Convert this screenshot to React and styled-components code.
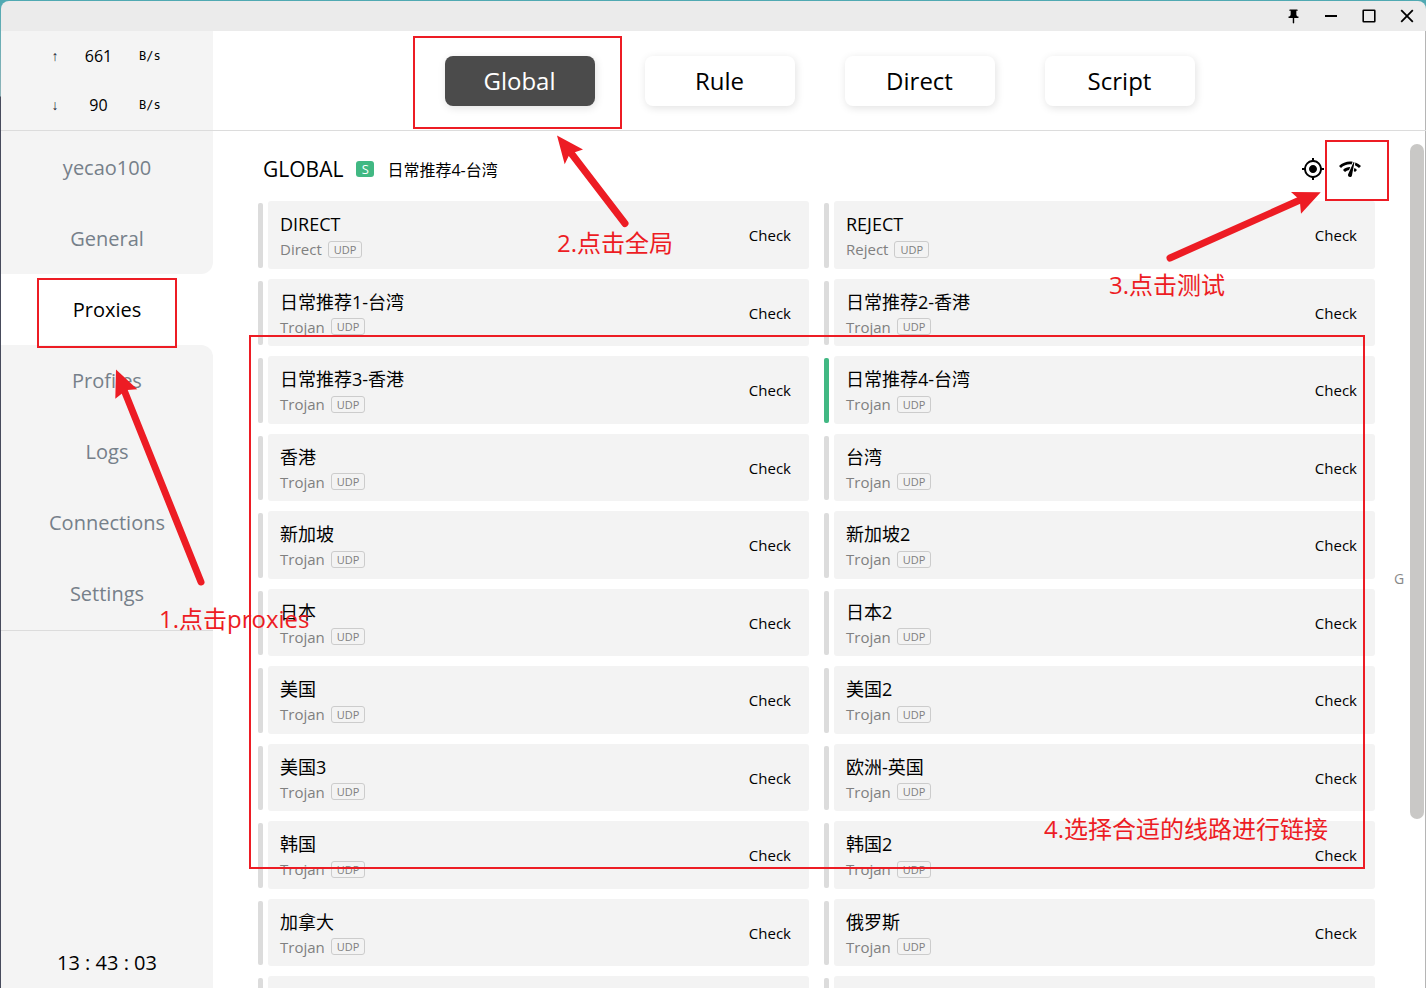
import React from 'react';
import styled, { createGlobalStyle, css } from 'styled-components';
import { MdPushPin, MdMyLocation, MdNetworkCheck } from 'react-icons/md';

const GlobalStyle = createGlobalStyle`
  * {
    box-sizing: border-box;
  }

  body {
    margin: 0;
    background: linear-gradient(#4fa9b2 0, #8fb3b8 96px, #474b5c 97px);
    font-family: 'Open Sans', 'Noto Sans CJK SC', sans-serif;
    color: #000;
  }

  button {
    font-family: inherit;
    color: inherit;
    border: none;
    padding: 0;
    background: none;
    cursor: pointer;
  }
`;

const Window = styled.div`
  position: relative;
  display: flex;
  flex-direction: column;
  height: 100vh;
  padding: 1px 0 0 1px;
  overflow: hidden;
`;

const TitleBar = styled.header`
  display: flex;
  flex: none;
  justify-content: flex-end;
  align-items: center;
  gap: 14px;
  height: 30px;
  padding-right: 7px;
  background: #ebebeb;
  border-radius: 8px 8px 0 0;
`;

const WindowButton = styled.button`
  display: flex;
  align-items: center;
  justify-content: center;
  width: 24px;
  height: 24px;
`;

const Body = styled.div`
  display: flex;
  flex: 1;
  min-height: 0;
  background: #fff;
  box-shadow: inset -1px 0 #b5b5b5;
`;

const Sidebar = styled.aside`
  display: flex;
  flex-direction: column;
  flex: none;
  width: 212px;
`;

const Traffic = styled.div`
  display: flex;
  flex-direction: column;
  height: 100px;
  background: #f4f4f4;
  border-bottom: 1px solid #dcdcdc;
`;

const TrafficRow = styled.div`
  display: flex;
  align-items: center;
  height: 50px;
  padding-left: 44px;
`;

const TrafficArrow = styled.span`
  width: 20px;
  font-size: 14px;
  text-align: center;
  font-family: 'Liberation Sans', sans-serif;
  color: #223;
`;

const TrafficValue = styled.span`
  width: 67px;
  font-size: 16px;
  text-align: center;
`;

const TrafficUnit = styled.span`
  padding-left: 7px;
  font-family: 'DejaVu Sans Mono', monospace;
  font-size: 12px;
`;

const Nav = styled.nav`
  display: flex;
  flex-direction: column;
  padding: 1px 0;
  background:
    linear-gradient(#f4f4f4, #f4f4f4) top / 100% 1px no-repeat,
    linear-gradient(#f4f4f4, #f4f4f4) bottom / 100% 1px no-repeat;
  border-bottom: 1px solid #dcdcdc;
`;

const NavItem = styled.a`
  display: flex;
  align-items: center;
  justify-content: center;
  height: 71px;
  font-size: 20px;
  text-decoration: none;
  color: ${(props) => (props.$active ? '#000' : '#76808a')};
  background: ${(props) => (props.$active ? '#fff' : '#f4f4f4')};
  ${(props) => props.$before && css`border-bottom-right-radius: 12px;`}
  ${(props) => props.$after && css`border-top-right-radius: 12px;`}
`;

const Clock = styled.div`
  display: flex;
  flex: 1;
  align-items: flex-end;
  justify-content: center;
  padding-bottom: 12px;
  font-size: 20px;
  background: #f4f4f4;
`;

const Main = styled.main`
  display: flex;
  flex: 1;
  flex-direction: column;
  min-width: 0;
`;

const Modes = styled.div`
  display: flex;
  flex: none;
  align-items: center;
  justify-content: center;
  gap: 50px;
  height: 100px;
  border-bottom: 1px solid #dcdcdc;
`;

const ModeButton = styled.button`
  width: 150px;
  height: 50px;
  font-size: 24px;
  border-radius: 8px;
  box-shadow: 1px 2px 8px rgba(0, 0, 0, 0.12);

  && {
    color: ${(props) => (props.$active ? '#fff' : '#000')};
    background: ${(props) => (props.$active ? '#4b4b4b' : '#fff')};
  }
`;

const Content = styled.div`
  display: flex;
  flex: 1;
  min-height: 0;
`;

const Group = styled.section`
  flex: 1;
  min-width: 0;
  padding-left: 45px;
  overflow: hidden;
`;

const GroupHeader = styled.div`
  display: flex;
  align-items: center;
  height: 70px;
  padding: 5px 13px 0 5px;
`;

const GroupName = styled.h2`
  margin: 0;
  font-size: 21px;
  font-weight: 400;
`;

const GroupType = styled.span`
  width: 18px;
  height: 16px;
  margin: 0 13px;
  font-size: 13px;
  line-height: 16px;
  text-align: center;
  color: #fff;
  background: #41b883;
  border-radius: 3px;
`;

const GroupNow = styled.span`
  flex: 1;
  font-size: 16px;
`;

const IconButton = styled.button`
  display: flex;
  margin-left: 13px;
`;

const Proxies = styled.div`
  display: grid;
  grid-template-columns: 1fr 1fr;
  grid-auto-rows: 68px 67px;
  gap: 10px 15px;
`;

const Proxy = styled.div`
  display: flex;
  align-items: center;
  gap: 5px;
`;

const Indicator = styled.div`
  align-self: stretch;
  width: 5px;
  margin: 2px 0 1px;
  border-radius: 2px;
  background: ${(props) => (props.$active ? '#41b883' : '#dcdcdc')};
`;

const Card = styled.div`
  display: flex;
  flex: 1;
  align-self: stretch;
  align-items: center;
  justify-content: space-between;
  padding: 0 18px 0 12px;
  background: #f3f3f3;
  border-radius: 3px;
`;

const ProxyInfo = styled.div`
  padding-top: 3px;
`;

const ProxyName = styled.div`
  font-size: 18px;
  line-height: 25px;
`;

const ProxyMeta = styled.div`
  display: flex;
  align-items: center;
  gap: 6px;
  font-size: 15px;
  line-height: 24px;
  color: #808080;
`;

const Badge = styled.span`
  height: 17px;
  padding: 0 5px;
  font-size: 11px;
  line-height: 15px;
  border: 1px solid #ccc;
  border-radius: 3px;
`;

const CheckButton = styled.button`
  font-size: 15px;
`;

const IndexRail = styled.div`
  display: flex;
  flex: none;
  align-items: center;
  justify-content: center;
  width: 22px;
  margin-left: 13px;
  padding-top: 38px;
  font-size: 14px;
  color: #888;
`;

const Scrollbar = styled.div`
  flex: none;
  width: 14px;
  margin: 13px 2px 0 0;
`;

const Thumb = styled.div`
  height: 80%;
  border-radius: 7px;
  background: #c9c8c6;
`;

const Mark = styled.div`
  position: absolute;
  border: 2px solid #ed1c24;
  pointer-events: none;
  left: ${(props) => props.$x}px;
  top: ${(props) => props.$y}px;
  width: ${(props) => props.$w}px;
  height: ${(props) => props.$h}px;
`;

const Note = styled.div`
  position: absolute;
  left: ${(props) => props.$x}px;
  top: ${(props) => props.$y}px;
  font-size: 24px;
  line-height: 32px;
  white-space: nowrap;
  color: #ed1c24;
  pointer-events: none;
`;

const Arrows = styled.svg`
  position: absolute;
  left: 0;
  top: 0;
  pointer-events: none;
`;

const navItems = ['yecao100', 'General', 'Proxies', 'Profiles', 'Logs', 'Connections', 'Settings'];
const activeNav = 2;

const modes = ['Global', 'Rule', 'Direct', 'Script'];

const proxies = [
  { name: 'DIRECT', type: 'Direct' },
  { name: 'REJECT', type: 'Reject' },
  ...[
    '日常推荐1-台湾',
    '日常推荐2-香港',
    '日常推荐3-香港',
    '日常推荐4-台湾',
    '香港',
    '台湾',
    '新加坡',
    '新加坡2',
    '日本',
    '日本2',
    '美国',
    '美国2',
    '美国3',
    '欧洲-英国',
    '韩国',
    '韩国2',
    '加拿大',
    '俄罗斯',
  ].map((name) => ({ name, type: 'Trojan' })),
  {},
  {},
];

const current = '日常推荐4-台湾';

const ProxyItem = ({ name, type }) => (
  <Proxy>
    <Indicator $active={name === current} />
    <Card>
      {name && (
        <>
          <ProxyInfo>
            <ProxyName>{name}</ProxyName>
            <ProxyMeta>
              {type}
              <Badge>UDP</Badge>
            </ProxyMeta>
          </ProxyInfo>
          <CheckButton type="button">Check</CheckButton>
        </>
      )}
    </Card>
  </Proxy>
);

const WindowControls = () => (
  <TitleBar>
    <WindowButton type="button" aria-label="Pin">
      <MdPushPin size={17} />
    </WindowButton>
    <WindowButton type="button" aria-label="Minimize">
      <svg width="14" height="14" viewBox="0 0 14 14">
        <path d="M1 7h12" stroke="#000" strokeWidth="2" />
      </svg>
    </WindowButton>
    <WindowButton type="button" aria-label="Maximize">
      <svg width="14" height="14" viewBox="0 0 14 14">
        <rect x="1.2" y="1.2" width="11.6" height="11.6" rx="0.5" fill="none" stroke="#000" strokeWidth="1.6" />
      </svg>
    </WindowButton>
    <WindowButton type="button" aria-label="Close">
      <svg width="14" height="14" viewBox="0 0 14 14">
        <path d="M1.2 1.2l11.6 11.6M12.8 1.2L1.2 12.8" stroke="#000" strokeWidth="1.8" />
      </svg>
    </WindowButton>
  </TitleBar>
);

const Annotations = () => (
  <>
    <Mark $x={413} $y={36} $w={209} $h={93} />
    <Mark $x={37} $y={278} $w={140} $h={70} />
    <Mark $x={1325} $y={140} $w={64} $h={61} />
    <Mark $x={249} $y={335} $w={1116} $h={534} />
    <Arrows width="1426" height="988" viewBox="0 0 1426 988" fill="#ed1c24" stroke="#ed1c24">
      <g strokeWidth="7" strokeLinecap="round">
        <path d="M201 582L124 390" />
        <path d="M625 223.5L571 153" />
        <path d="M1170 258L1300 200" />
      </g>
      <g stroke="none">
        <path d="M116 369.5L137.3 389.3L127.3 390L122.3 393.3L115.3 398.7Z" />
        <path d="M557 135.5L583 149.5L574 152.5L568.7 156L564.7 164.3Z" />
        <path d="M1320.7 192.2L1291 192L1297.7 198L1300 202.7L1301 213.7Z" />
      </g>
    </Arrows>
    <Note $x={159} $y={603}>1.点击proxies</Note>
    <Note $x={557} $y={227}>2.点击全局</Note>
    <Note $x={1109} $y={269}>3.点击测试</Note>
    <Note $x={1044} $y={813}>4.选择合适的线路进行链接</Note>
  </>
);

const App = () => {
  return (
    <Window>
      <GlobalStyle />
      <WindowControls />
      <Body>
        <Sidebar>
          <Traffic>
            <TrafficRow>
              <TrafficArrow>↑</TrafficArrow>
              <TrafficValue>661</TrafficValue>
              <TrafficUnit>B/s</TrafficUnit>
            </TrafficRow>
            <TrafficRow>
              <TrafficArrow>↓</TrafficArrow>
              <TrafficValue>90</TrafficValue>
              <TrafficUnit>B/s</TrafficUnit>
            </TrafficRow>
          </Traffic>
          <Nav>
            {navItems.map((item, i) => (
              <NavItem
                key={item}
                href="#"
                $active={i === activeNav}
                $before={i === activeNav - 1}
                $after={i === activeNav + 1}
              >
                {item}
              </NavItem>
            ))}
          </Nav>
          <Clock>13 : 43 : 03</Clock>
        </Sidebar>
        <Main>
          <Modes>
            {modes.map((mode) => (
              <ModeButton key={mode} type="button" $active={mode === 'Global'}>
                {mode}
              </ModeButton>
            ))}
          </Modes>
          <Content>
            <Group>
              <GroupHeader>
                <GroupName>GLOBAL</GroupName>
                <GroupType>S</GroupType>
                <GroupNow>{current}</GroupNow>
                <IconButton type="button" aria-label="Locate">
                  <MdMyLocation size={24} />
                </IconButton>
                <IconButton type="button" aria-label="Test">
                  <MdNetworkCheck size={24} />
                </IconButton>
              </GroupHeader>
              <Proxies>
                {proxies.map((proxy, i) => (
                  <ProxyItem key={i} name={proxy.name} type={proxy.type} />
                ))}
              </Proxies>
            </Group>
            <IndexRail>G</IndexRail>
            <Scrollbar>
              <Thumb />
            </Scrollbar>
          </Content>
        </Main>
      </Body>
      <Annotations />
    </Window>
  );
};

export default App;
